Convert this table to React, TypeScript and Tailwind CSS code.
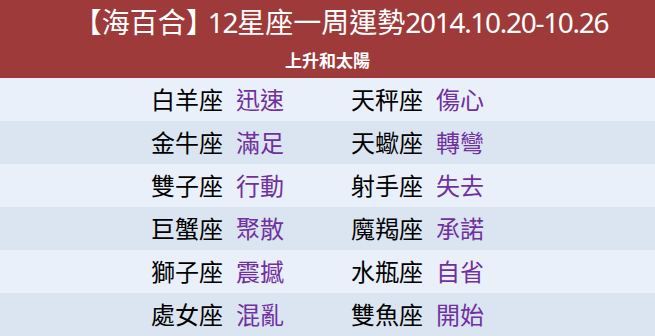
const rows = [
  ["白羊座", "迅速", "天秤座", "傷心"],
  ["金牛座", "滿足", "天蠍座", "轉彎"],
  ["雙子座", "行動", "射手座", "失去"],
  ["巨蟹座", "聚散", "魔羯座", "承諾"],
  ["獅子座", "震撼", "水瓶座", "自省"],
  ["處女座", "混亂", "雙魚座", "開始"],
];

export default function App() {
  return (
    <div
      className="w-[655px] h-[336px] overflow-hidden bg-[#eaf0f9]"
      style={{ fontFamily: '"Noto Sans", "Noto Sans CJK TC", sans-serif' }}
    >
      <div className="h-[78px] bg-[#9e3a39] text-white flex flex-col items-center">
        <div className="mt-[4px] text-[28px] leading-[36px] pl-[39px] flex">
          <span className="-ml-[12px]">【</span>
          <span>海百合</span>
          <span className="tracking-[-6px]">】</span>
          <span className="tracking-[-1.3px]">12</span>
          <span>星座一周運勢</span>
          <span className="tracking-[-1.3px]">2014.10.20-10.26</span>
        </div>
        <div className="mt-[11px] text-[17px] leading-[20px] font-bold">上升和太陽</div>
      </div>
      {rows.map((r, i) => (
        <div
          key={i}
          className={`h-[43px] flex items-center pl-[151px] text-[24px] leading-none ${
            i % 2 === 0 ? "bg-[#eaf0f9]" : "bg-[#dbe5f1]"
          }`}
        >
          <span className="w-[85px] text-black">{r[0]}</span>
          <span className="w-[115px] text-[#7030a0]">{r[1]}</span>
          <span className="w-[85px] text-black">{r[2]}</span>
          <span className="text-[#7030a0]">{r[3]}</span>
        </div>
      ))}
    </div>
  );
}
